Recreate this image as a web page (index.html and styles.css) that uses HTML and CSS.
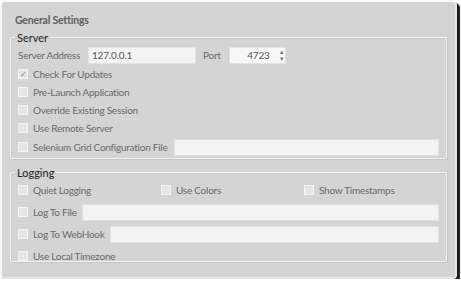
FILE: index.html
```html
<!DOCTYPE html>
<html lang="en">
<head>
<meta charset="UTF-8" />
<title>General Settings</title>
<link rel="stylesheet" href="styles.css">
</head>
<body>
  <div class="window">
    <header>General Settings</header>

    <fieldset class="group server">
      <legend>Server</legend>
      <div class="row address">
        <label for="address">Server Address</label>
        <input id="address" class="field addr" type="text" value="127.0.0.1">
        <label for="port" class="port-label">Port</label>
        <div class="spinner">
          <input id="port" class="field port" type="text" value="4723">
          <span class="arrows"><span>&#9652;</span><span>&#9662;</span></span>
        </div>
      </div>
      <label class="check row"><span class="box checked">&#10003;</span>Check For Updates</label>
      <label class="check row"><span class="box"></span>Pre-Launch Application</label>
      <label class="check row"><span class="box"></span>Override Existing Session</label>
      <label class="check row"><span class="box"></span>Use Remote Server</label>
      <div class="row grid-row">
        <label class="check"><span class="box"></span>Selenium Grid Configuration File</label>
        <input class="field grow" type="text">
      </div>
    </fieldset>

    <fieldset class="group logging">
      <legend>Logging</legend>
      <div class="row three">
        <label class="check"><span class="box"></span>Quiet Logging</label>
        <label class="check"><span class="box"></span>Use Colors</label>
        <label class="check"><span class="box"></span>Show Timestamps</label>
      </div>
      <div class="row">
        <label class="check"><span class="box"></span>Log To File</label>
        <input class="field grow" type="text">
      </div>
      <div class="row">
        <label class="check"><span class="box"></span>Log To WebHook</label>
        <input class="field grow" type="text">
      </div>
      <label class="check row"><span class="box"></span>Use Local Timezone</label>
    </fieldset>
  </div>
</body>
</html>
```

FILE: styles.css
```css
* {
  box-sizing: border-box;
}
body {
  margin: 0;
  background: #ffffff;
  font-family: Lato, 'Open Sans', sans-serif;
  font-size: 10px;
  letter-spacing: -0.25px;
  color: #6a6a6a;
}
.window {
  width: 457px;
  height: 279px;
  background: #d4d4d4;
  border: 2px solid #f7f7f7;
  border-right-color: #e6e6e6;
  border-bottom-color: #e6e6e6;
  border-radius: 5px 5px 4px 4px;
  box-shadow: 3px 3px 1px #1a1a1a;
  padding: 0 8px 0 8px;
}
header {
  height: 29px;
  padding: 12px 0 0 5px;
  font-weight: 700;
  color: #5c5c5c;
  font-size: 10.5px;
  letter-spacing: -0.2px;
}
.group {
  margin: 0;
  min-width: 0;
  border: 1px solid #f2f2f2;
  box-shadow: inset 1px 1px 0 #c9c9c9, 1px 1px 0 #c4c4c4;
  border-radius: 2px;
  padding: 0 7px 0 7px;
}
legend {
  padding: 0 2px 0 2px;
  margin-left: -3px;
  color: #1e1e1e;
  font-size: 11px;
  letter-spacing: 0;
}
.server {
  height: 128px;
}
.logging {
  margin-top: 7px;
  height: 96px;
}
.row {
  display: flex;
  align-items: center;
}
.address {
  height: 18px;
  margin-top: 2px;
  margin-bottom: 1px;
}
.server .check.row {
  height: 18px;
}
.grid-row {
  height: 20px;
}
.check {
  display: flex;
  align-items: center;
  white-space: nowrap;
}
.box {
  width: 10px;
  height: 10px;
  margin-right: 5px;
  background: #e6e6e6;
  border: 1px solid #f3f3f3;
  font-size: 8px;
  line-height: 8px;
  text-align: center;
  color: #7a7a7a;
}
.field {
  height: 17px;
  border: 1px solid #e2e2e2;
  background: #f3f3f3;
  font-family: Lato, 'Open Sans', sans-serif;
  font-size: 10px;
  letter-spacing: -0.2px;
  color: #555;
  padding: 0 3px;
}
.addr {
  width: 108px;
  margin-left: 8px;
}
.port-label {
  margin-left: 7px;
}
.spinner {
  position: relative;
  margin-left: 8px;
}
.port {
  width: 57px;
  text-align: right;
  padding-right: 15px;
  background: #f7f7f7;
}
.arrows {
  position: absolute;
  right: 2px;
  top: 1px;
  display: flex;
  flex-direction: column;
  font-size: 7px;
  line-height: 7px;
  color: #777;
}
.grow {
  flex: 1;
  min-width: 0;
  margin-left: 5px;
}
.grid-row .grow {
  margin-left: 7px;
}
.logging .row {
  height: 22px;
}
.three .check {
  width: 143px;
}
.three .check:last-child {
  width: auto;
}
```
